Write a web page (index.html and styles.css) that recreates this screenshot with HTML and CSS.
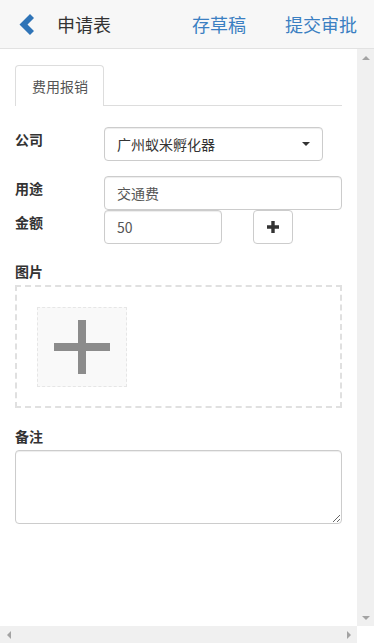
FILE: index.html
```html
<!DOCTYPE html>
<html lang="zh-CN">
  <head>
    <meta charset="UTF-8" />
    <meta name="viewport" content="width=374, user-scalable=no" />
    <title>申请表</title>
    <link rel="stylesheet" href="styles.css">
  </head>
  <body>
    <div class="page">
      <div class="topbar">
        <a class="back-btn">
          <svg width="16" height="22" viewBox="0 0 16 22">
            <path d="M11 0 L15 4 L8.5 10.5 L15 17 L11 21 L0.5 10.5 Z" fill="#2f74b7" />
          </svg>
        </a>
        <div class="page-title">申请表</div>
        <a class="top-link draft">存草稿</a>
        <a class="top-link">提交审批</a>
      </div>

      <div class="viewport">
        <div class="content">
          <ul class="tabs">
            <li class="tab active">费用报销</li>
          </ul>

          <div class="form-row first">
            <label class="field-label">公司</label>
            <div class="fake-select">
              <span>广州蚁米孵化器</span>
              <span class="caret"></span>
            </div>
          </div>

          <div class="form-row spaced">
            <label class="field-label">用途</label>
            <input class="text-input wide" type="text" value="交通费" />
          </div>

          <div class="form-row">
            <label class="field-label">金额</label>
            <input class="text-input amount" type="text" value="50" />
            <button class="add-btn">
              <svg width="12" height="12" viewBox="0 0 12 12">
                <path d="M4.3 0 H7.7 V4.3 H12 V7.7 H7.7 V12 H4.3 V7.7 H0 V4.3 H4.3 Z" fill="#333" />
              </svg>
            </button>
          </div>

          <div class="block-label pic-label">图片</div>
          <div class="upload-box">
            <div class="upload-tile">
              <svg width="56" height="54" viewBox="0 0 56 54">
                <rect x="24" y="0" width="8" height="54" fill="#8c8c8c" />
                <rect x="0" y="23" width="56" height="8" fill="#8c8c8c" />
              </svg>
            </div>
          </div>

          <div class="block-label note-label">备注</div>
          <textarea class="note-input"></textarea>
        </div>

        <div class="vscroll">
          <div class="sb-btn"><span class="arrow-up"></span></div>
          <div class="sb-btn"><span class="arrow-down"></span></div>
        </div>
        <div class="hscroll">
          <div class="sb-btn"><span class="arrow-left"></span></div>
          <div class="sb-btn"><span class="arrow-right"></span></div>
        </div>
        <div class="corner"></div>
      </div>
    </div>
  </body>
</html>
```

FILE: styles.css
```css
body {
  margin: 0;
  font-family: "Noto Sans CJK SC", "Noto Sans", sans-serif;
  font-size: 14px;
  color: #333;
  background: white;
}

.page {
  width: 374px;
  height: 643px;
  display: flex;
  flex-direction: column;
  overflow: hidden;
}

/* 상단 바 */
.topbar {
  height: 48px;
  flex-shrink: 0;
  background: #f7f7f7;
  border-bottom: 1px solid #e2e2e2;
  display: flex;
  align-items: center;
  padding: 0 17px 0 19px;
}

.back-btn {
  display: flex;
  width: 16px;
  height: 22px;
  margin-top: 2px;
}

.page-title {
  font-size: 18px;
  color: #333;
  margin-left: 22px;
  flex: 1;
}

.top-link {
  font-size: 18px;
  color: #3b7fc2;
  cursor: pointer;
}

.draft {
  margin-right: 39px;
}

/* 스크롤 영역 */
.viewport {
  flex: 1;
  display: grid;
  grid-template-columns: 1fr 17px;
  grid-template-rows: 1fr 17px;
  min-height: 0;
}

.content {
  padding: 16px 15px 0 15px;
  overflow: hidden;
}

.tabs {
  list-style: none;
  margin: 0;
  padding: 0;
  display: flex;
  border-bottom: 1px solid #ddd;
}

.tab {
  padding: 10px 15px 10px 16px;
  line-height: 20px;
  color: #555;
  border: 1px solid #ddd;
  border-bottom: none;
  border-radius: 4px 4px 0 0;
  background: white;
  margin-bottom: -1px;
}

.form-row {
  display: flex;
  align-items: flex-start;
}

.form-row.first {
  margin-top: 21px;
}

.form-row.spaced {
  margin-top: 15px;
}

.field-label {
  width: 89px;
  flex-shrink: 0;
  font-weight: bold;
  line-height: 20px;
  padding-top: 2px;
}

.fake-select,
.text-input {
  box-sizing: border-box;
  height: 34px;
  border: 1px solid #ccc;
  border-radius: 4px;
  box-shadow: inset 0 1px 1px rgba(0, 0, 0, 0.075);
  font-family: inherit;
  font-size: 14px;
  color: #555;
  padding: 0 12px;
  background: white;
}

.fake-select {
  width: 219px;
  display: flex;
  align-items: center;
  justify-content: space-between;
  color: #333;
}

.caret {
  width: 0;
  height: 0;
  border-left: 4px solid transparent;
  border-right: 4px solid transparent;
  border-top: 4px solid #333;
  margin-right: 0;
}

.text-input.wide {
  width: 238px;
}

.text-input.amount {
  width: 118px;
}

.add-btn {
  width: 40px;
  height: 34px;
  margin-left: 31px;
  border: 1px solid #ccc;
  border-radius: 4px;
  background: white;
  display: flex;
  align-items: center;
  justify-content: center;
  padding: 0;
}

.block-label {
  font-weight: bold;
  line-height: 20px;
  margin-bottom: 4px;
}

.pic-label {
  margin-top: 17px;
}

.upload-box {
  border: 2px dashed #e0e0e0;
  padding: 20px 20px 19px;
}

.upload-tile {
  box-sizing: border-box;
  width: 90px;
  height: 80px;
  background: #f9f9f9;
  border: 1px dashed #e6e6e6;
  display: flex;
  align-items: center;
  justify-content: center;
}

.note-label {
  margin-top: 18px;
}

.note-input {
  display: block;
  box-sizing: border-box;
  width: 327px;
  height: 74px;
  margin: 0;
  border: 1px solid #ccc;
  border-radius: 4px;
  box-shadow: inset 0 1px 1px rgba(0, 0, 0, 0.075);
  font-family: inherit;
}

/* 가짜 스크롤바 */
.vscroll {
  background: #f0f0f0;
  display: flex;
  flex-direction: column;
  justify-content: space-between;
}

.hscroll {
  background: #f0f0f0;
  display: flex;
  justify-content: space-between;
}

.corner {
  background: white;
}

.sb-btn {
  width: 17px;
  height: 17px;
  display: flex;
  align-items: center;
  justify-content: center;
}

.arrow-up {
  border-left: 4px solid transparent;
  border-right: 4px solid transparent;
  border-bottom: 4px solid #a3a3a3;
}

.arrow-down {
  border-left: 4px solid transparent;
  border-right: 4px solid transparent;
  border-top: 4px solid #a3a3a3;
}

.arrow-left {
  border-top: 4px solid transparent;
  border-bottom: 4px solid transparent;
  border-right: 4px solid #a3a3a3;
}

.arrow-right {
  border-top: 4px solid transparent;
  border-bottom: 4px solid transparent;
  border-left: 4px solid #a3a3a3;
}
```
